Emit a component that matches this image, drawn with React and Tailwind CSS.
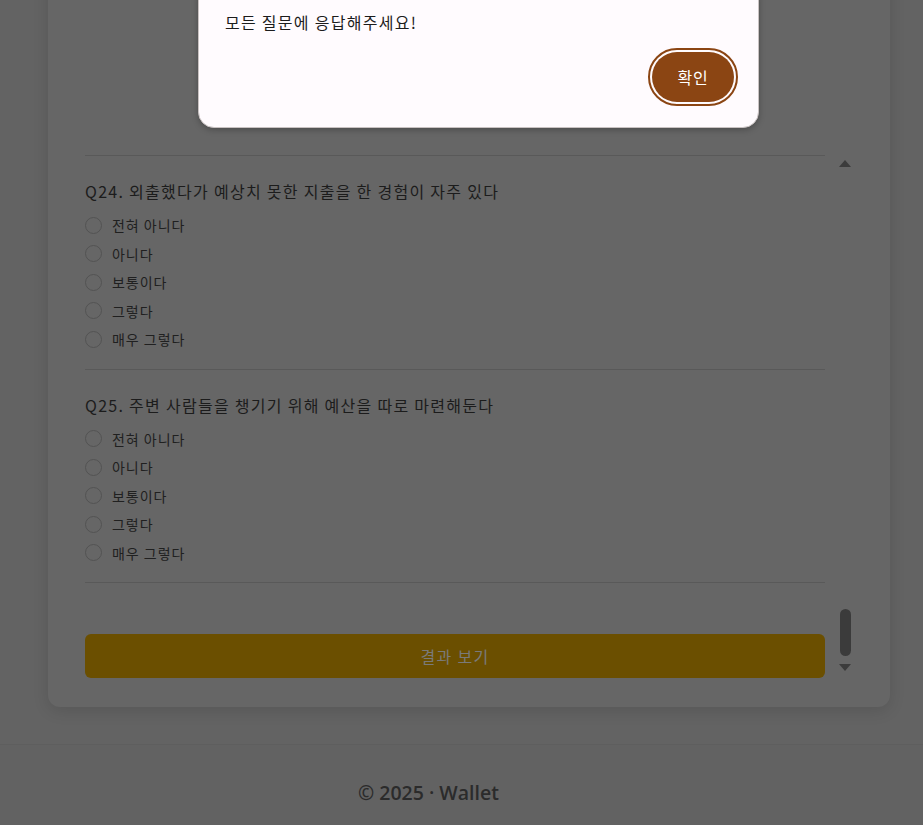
const options = ['전혀 아니다', '아니다', '보통이다', '그렇다', '매우 그렇다'];

const questions = [
  { id: 24, text: '외출했다가 예상치 못한 지출을 한 경험이 자주 있다' },
  { id: 25, text: '주변 사람들을 챙기기 위해 예산을 따로 마련해둔다' },
];

function Question({ q }) {
  return (
    <div className="border-b border-[#595959] pt-[23px] pb-[15px]">
      <div className="text-[16px] leading-[24px] tracking-[0.08em] text-[#1c1c1c]">
        Q{q.id}. {q.text}
      </div>
      <div className="mt-[8px] flex flex-col">
        {options.map((o) => (
          <label key={o} className="flex h-[28.5px] items-center gap-[10px]">
            <span className="h-[17px] w-[17px] shrink-0 rounded-full border border-[#535353]" />
            <span className="text-[14px] leading-[20px] tracking-[0.07em] text-[#202020]">{o}</span>
          </label>
        ))}
      </div>
    </div>
  );
}

function Scrollbar() {
  return (
    <div className="flex w-[14px] flex-col items-center pt-[8px] pb-[4px]">
      <div className="h-0 w-0 border-x-[6px] border-b-[7px] border-x-transparent border-b-[#3c3c3c]" />
      <div className="flex-1" />
      <div className="h-[47px] w-[11px] rounded-full bg-[#3b3b3b]" />
      <div className="mt-[8px] h-0 w-0 border-x-[6px] border-t-[7px] border-x-transparent border-t-[#3c3c3c]" />
    </div>
  );
}

export default function App() {
  return (
    <div
      className="relative h-[825px] w-[923px] overflow-hidden bg-[#636363]"
      style={{ fontFamily: '"Noto Sans CJK KR", "Noto Sans", sans-serif' }}
    >
      <div className="ml-[48px] mt-[-40px] w-[842px] rounded-[12px] bg-[#666666] shadow-[0_4px_16px_rgba(0,0,0,0.12)] pb-[29px]">
        <div className="flex pl-[37px] pr-[38px]">
          <div className="w-[740px] pt-[40px]">
            <div className="h-[156px] border-b border-[#595959]" />
            {questions.map((q) => (
              <Question key={q.id} q={q} />
            ))}
            <div className="mt-[51px] flex h-[44px] items-center justify-center rounded-[6px] bg-[#6b4f00] text-[16px] tracking-[0.08em] text-[#7a7a7a]">
              결과 보기
            </div>
          </div>
          <div className="ml-[13px] mt-[192px] mb-[3px] flex">
            <Scrollbar />
          </div>
        </div>
      </div>

      <footer className="mt-[37px] h-[120px] border-t border-[#5e5e5e] bg-[#626262] pt-[34px] pl-[358px]">
        <span
          className="text-[19.5px] leading-[28px] font-semibold text-[#2b2b2b]"
          style={{ fontFamily: '"Open Sans", "DejaVu Sans", sans-serif' }}
        >
          © 2025 · Wallet
        </span>
      </footer>

      <div className="absolute left-[198px] top-[-20px] w-[561px] rounded-[16px] border border-[#c9c2c2] bg-[#fffbfe] px-[26px] pt-[29px] pb-[25px] shadow-[0_2px_6px_rgba(0,0,0,0.25)]">
        <p className="text-[16px] leading-[24px] tracking-[0.08em] text-[#1c1c1c]">모든 질문에 응답해주세요!</p>
        <div className="mt-[18px] flex justify-end">
          <button className="mr-[-2px] h-[50px] w-[82px] rounded-full bg-[#8b4513] text-[16px] tracking-[0.05em] text-white outline-2 outline-offset-2 outline-[#8b4513]">
            확인
          </button>
        </div>
      </div>
    </div>
  );
}
